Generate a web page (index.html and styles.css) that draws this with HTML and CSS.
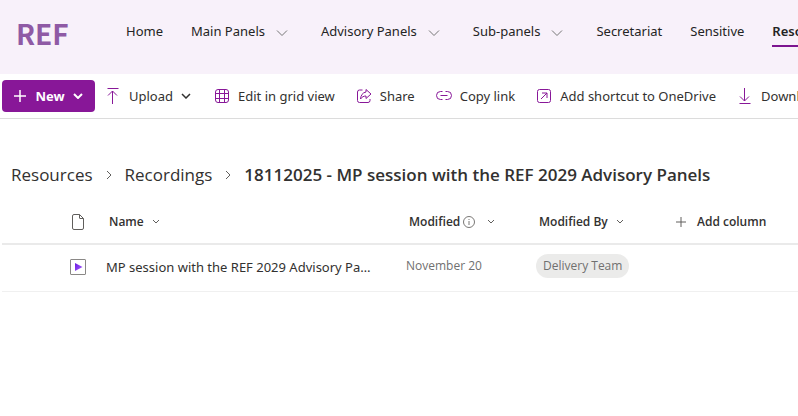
FILE: index.html
```html
<!DOCTYPE html>
<html lang="en">
<head>
  <meta charset="UTF-8">
  <meta name="viewport" content="width=device-width, initial-scale=1.0">
  <title>REF - Recordings</title>
  <link rel="stylesheet" href="styles.css">
</head>
<body>
  <header class="site-header">
    <a class="logo" href="#">REF</a>
    <nav class="site-nav">
      <a href="#">Home</a>
      <a href="#">Main Panels <svg class="nav-chevron" viewBox="0 0 12 8"><path d="M1 1.500l5 5 5-5"/></svg></a>
      <a href="#">Advisory Panels <svg class="nav-chevron" viewBox="0 0 12 8"><path d="M1 1.500l5 5 5-5"/></svg></a>
      <a href="#">Sub-panels <svg class="nav-chevron" viewBox="0 0 12 8"><path d="M1 1.500l5 5 5-5"/></svg></a>
      <a href="#">Secretariat</a>
      <a href="#">Sensitive</a>
      <a class="active" href="#">Resources</a>
    </nav>
  </header>

  <div class="toolbar">
    <button class="btn-new">
      <svg class="icon-plus" viewBox="0 0 14 14"><path d="M7 1v12M1 7h12"/></svg>
      New
      <svg class="chevron" viewBox="0 0 10 6"><path d="M1 1l4 4 4-4"/></svg>
    </button>
    <button class="btn upload">
      <svg class="icon" viewBox="0 0 16 16"><path d="M2.500 0.500h11M7.500 16V3M3 7.500L7.500 3l4.500 4.500"/></svg>
      Upload
      <svg class="chevron" viewBox="0 0 10 6"><path d="M1 1l4 4 4-4"/></svg>
    </button>
    <button class="btn">
      <svg class="icon" viewBox="0 0 16 16"><rect x="1.500" y="1.500" width="13" height="13" rx="2.500"/><path d="M5.500 1.500v13M10.500 1.500v13M1.500 5.500h13M1.500 10.500h13"/></svg>
      Edit in grid view
    </button>
    <button class="btn">
      <svg class="icon" viewBox="0 0 16 16"><path d="M6.500 2H3.500a2 2 0 0 0-2 2v8.500a2 2 0 0 0 2 2h8.500a2 2 0 0 0 2-2V11"/><path d="M10 1.500L15 6l-5 4.500V8C7.500 8 6 9 4.500 11 4.800 7.500 6.500 4.500 10 4z"/></svg>
      Share
    </button>
    <button class="btn">
      <svg class="icon" viewBox="0 0 16 16"><path d="M6.500 3.500H4.500a4 4 0 0 0 0 8h2M9.500 3.500h2a4 4 0 0 1 0 8h-2M4.500 7.500h7"/></svg>
      Copy link
    </button>
    <button class="btn">
      <svg class="icon" viewBox="0 0 16 16"><rect x="1.500" y="1.500" width="13" height="13" rx="2"/><path d="M5 11l6-6M6 5h5v5"/></svg>
      Add shortcut to OneDrive
    </button>
    <button class="btn">
      <svg class="icon" viewBox="0 0 16 16"><path d="M7.500 0v13M3 8.500L7.500 13l4.500-4.500M2.500 15.500h11"/></svg>
      Download
    </button>
  </div>

  <main>
    <nav class="breadcrumb">
      <a href="#">Resources</a>
      <svg viewBox="0 0 6 10"><path d="M1 1l4 4-4 4"/></svg>
      <a href="#">Recordings</a>
      <svg viewBox="0 0 6 10"><path d="M1 1l4 4-4 4"/></svg>
      <h1>18112025 - MP session with the REF 2029 Advisory Panels</h1>
    </nav>

    <table class="files">
      <colgroup>
        <col class="col-type">
        <col class="col-name">
        <col class="col-modified">
        <col class="col-by">
        <col>
      </colgroup>
      <thead>
        <tr>
          <th class="type"><svg class="icon-file" viewBox="0 0 16 16"><path d="M9.500 0.500H4A1.500 1.500 0 0 0 2.500 2v12A1.500 1.500 0 0 0 4 15.500h8A1.500 1.500 0 0 0 13.500 14V4.500zM9.500 0.500V4a0.500 0.500 0 0 0 0.500 0.500H13.500"/></svg></th>
          <th><div class="head">Name <svg class="sort" viewBox="0 0 8 5"><path d="M1 1l3 3 3-3"/></svg></div></th>
          <th><div class="head">Modified <svg class="icon-info" viewBox="0 0 12 12"><circle cx="6" cy="6" r="5.500"/><path d="M6 5v4M6 3v1"/></svg> <svg class="sort" viewBox="0 0 8 5"><path d="M1 1l3 3 3-3"/></svg></div></th>
          <th><div class="head">Modified By <svg class="sort" viewBox="0 0 8 5"><path d="M1 1l3 3 3-3"/></svg></div></th>
          <th class="add"><button class="btn-add"><svg viewBox="0 0 10 10"><path d="M5 0v10M0 5h10"/></svg> Add column</button></th>
        </tr>
      </thead>
      <tbody>
        <tr>
          <td class="type"><svg class="icon-video" viewBox="0 0 16 16"><defs><linearGradient id="play" x1="0" y1="0" x2="1" y2="1"><stop offset="0" stop-color="#6a1be0"/><stop offset="1" stop-color="#a860ff"/></linearGradient></defs><rect x="0.500" y="0.500" width="15" height="15" rx="0.500" fill="#fff" stroke="#8a8886"/><path d="M5 4l7.500 4L5 12z" fill="url(#play)"/></svg></td>
          <td><a class="file-name" href="#">MP session with the REF 2029 Advisory Panels</a></td>
          <td class="meta">November 20</td>
          <td class="meta"><span class="person">Delivery Team</span></td>
          <td></td>
        </tr>
      </tbody>
    </table>
  </main>
</body>
</html>
```
FILE: styles.css
```css
* {
  box-sizing: border-box;
}

body {
  margin: 0;
  font-family: "Noto Sans", "Open Sans", sans-serif;
  font-size: 13px;
  color: #323130;
  background-color: #fff;
  overflow-x: hidden;
}

a {
  color: inherit;
  text-decoration: none;
}

button {
  font: inherit;
  color: inherit;
  background: none;
  border: none;
  padding: 0;
  cursor: pointer;
}

svg {
  flex: none;
  fill: none;
  stroke: currentColor;
}

/* header */
.site-header {
  display: flex;
  align-items: flex-start;
  height: 74px;
  padding: 16px 0 0 16px;
  background-color: #f8f1fa;
  overflow: hidden;
}

.logo {
  flex: none;
  width: 110px;
  font-family: "Noto Sans CJK JP", "Open Sans", sans-serif;
  font-size: 28px;
  font-weight: bold;
  line-height: 34px;
  color: #8f5aa5;
}

.site-nav {
  display: flex;
  gap: 28px;
  white-space: nowrap;
}

.site-nav a {
  display: flex;
  align-items: center;
  height: 31px;
  border-bottom: 2px solid transparent;
  color: #242424;
}

.site-nav .active {
  font-weight: 600;
  border-bottom-color: #7d1590;
}

.nav-chevron {
  width: 12px;
  height: 8px;
  margin: 4px 5px 0 11px;
  color: #767676;
}

/* command bar */
.toolbar {
  display: flex;
  align-items: center;
  gap: 21px;
  height: 45px;
  padding-left: 2px;
  border-bottom: 1px solid #dcdcdc;
  white-space: nowrap;
  overflow: hidden;
}

.btn-new {
  display: flex;
  align-items: center;
  justify-content: space-between;
  flex: none;
  width: 93px;
  height: 32px;
  padding: 0 12px 0 11px;
  border-radius: 4px;
  font-weight: 700;
  color: #fff;
  background-color: #881798;
}

.icon-plus {
  width: 14px;
  height: 14px;
  stroke-width: 1.5;
}

.chevron {
  width: 10px;
  height: 6px;
  stroke-width: 1.5;
}

.btn-new .chevron {
  stroke-width: 2;
}

.btn {
  display: flex;
  align-items: center;
  flex: none;
  gap: 8px;
}

.upload {
  margin: 0 2px 0 -11px;
}

.icon {
  width: 16px;
  height: 16px;
  color: #881798;
}

/* breadcrumb */
.breadcrumb {
  display: flex;
  align-items: center;
  gap: 13px;
  padding: 42px 0 0 11px;
  font-family: "Open Sans", sans-serif;
  font-size: 17px;
  line-height: 28px;
  white-space: nowrap;
}

.breadcrumb h1 {
  margin: 0;
  font-size: 17px;
  font-weight: 600;
}

.breadcrumb svg {
  width: 6px;
  height: 10px;
  color: #605e5c;
}

/* file list */
.files {
  width: calc(100% - 2px);
  margin: 11px 0 0 2px;
  table-layout: fixed;
  border-collapse: separate;
  border-spacing: 0;
}

.col-type {
  width: 92px;
}

.col-name {
  width: 300px;
}

.col-modified,
.col-by {
  width: 130px;
}

.files th {
  height: 45px;
  padding: 0 0 0 15px;
  border-bottom: 2px solid #eaeaea;
  font-family: "Open Sans", sans-serif;
  font-size: 12px;
  font-weight: 600;
  text-align: left;
  white-space: nowrap;
}

.files td {
  height: 47px;
  padding: 0 0 2px 12px;
  border-bottom: 1px solid #f0f0f0;
}

.files .type {
  padding-left: 68px;
}

.type svg {
  display: block;
}

.head,
.btn-add {
  display: flex;
  align-items: center;
}

.sort {
  width: 8px;
  height: 5px;
  margin-left: 8px;
  color: #605e5c;
}

.icon-info {
  width: 12px;
  height: 12px;
  margin: 0 4px 0 3px;
  color: #797775;
}

.files .add {
  padding-left: 22px;
}

.btn-add {
  gap: 11px;
}

.btn-add svg {
  width: 10px;
  height: 10px;
  color: #605e5c;
}

.icon-file {
  width: 16px;
  height: 16px;
  color: #605e5c;
}

.icon-video {
  width: 16px;
  height: 16px;
  stroke: none;
}

.file-name {
  display: block;
  width: 272px;
  overflow: hidden;
  text-overflow: ellipsis;
  white-space: nowrap;
}

.files .meta {
  padding-bottom: 4px;
  font-family: "Open Sans", sans-serif;
  font-size: 12px;
  line-height: 24px;
  color: #707070;
}

.person {
  display: inline-block;
  padding: 0 7px;
  border-radius: 12px;
  background-color: #ebebea;
}
```
